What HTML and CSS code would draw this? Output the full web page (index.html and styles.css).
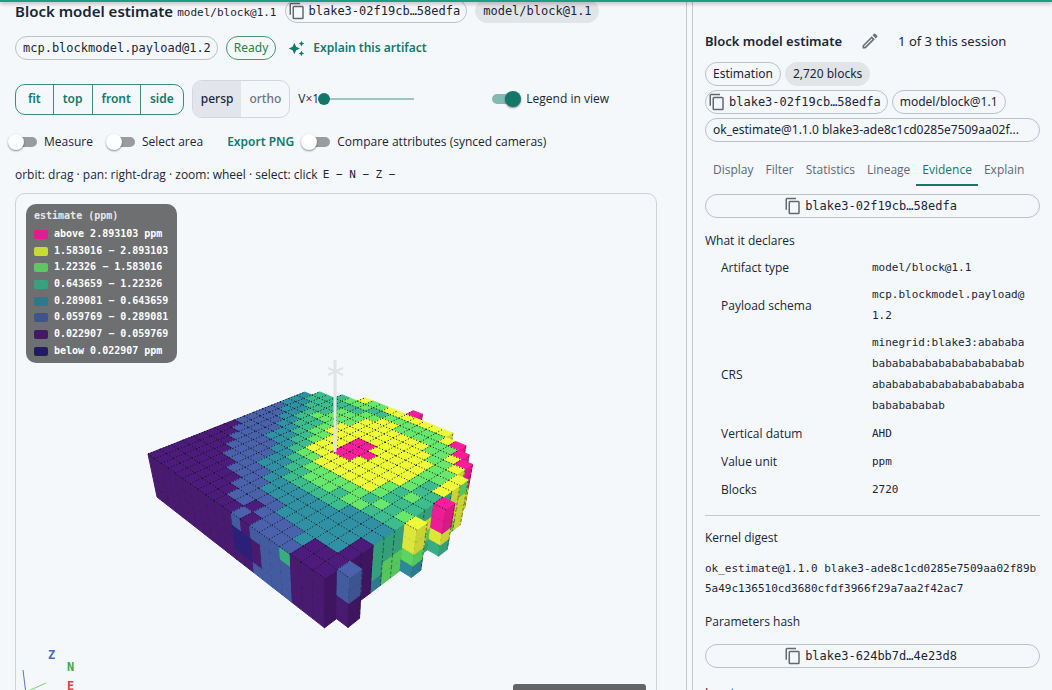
FILE: index.html
```html
<!DOCTYPE html>
<html lang="en">
<head>
<meta charset="utf-8">
<title>Block model estimate</title>
<link rel="stylesheet" href="styles.css">
</head>
<body>
<svg class="defs" aria-hidden="true">
  <symbol id="copy" viewBox="0 0 24 24"><path d="M16 1H4a2 2 0 0 0-2 2v14h2V3h12V1zm3 4H8a2 2 0 0 0-2 2v14a2 2 0 0 0 2 2h11a2 2 0 0 0 2-2V7a2 2 0 0 0-2-2zm0 16H8V7h11v14z"/></symbol>
</svg>
<div class="topbar"></div>
<div class="app">
  <main class="main">
    <div class="head">
      <h1 class="title">Block model estimate</h1>
      <span class="mono small kind">model/block@1.1</span>
      <button class="chip mono"><svg class="ico"><use href="#copy"/></svg>blake3-02f19cb…58edfa</button>
      <span class="chip filled mono">model/block@1.1</span>
    </div>
    <div class="head second">
      <span class="chip mono">mcp.blockmodel.payload@1.2</span>
      <span class="chip ready">Ready</span>
      <button class="link explain"><svg class="spark" viewBox="0 0 24 24"><path d="m19 9 1.250-2.750L23 5l-2.750-1.250L19 1l-1.250 2.750L15 5l2.750 1.250L19 9zm-7.500.5L9 4 6.500 9.500 1 12l5.500 2.500L9 20l2.500-5.500L17 12l-5.500-2.500zM19 15l-1.250 2.750L15 19l2.750 1.250L19 23l1.250-2.750L23 19l-2.750-1.250L19 15z"/></svg>Explain this artifact</button>
    </div>
    <div class="tools">
      <div class="group"><button>fit</button><button>top</button><button>front</button><button>side</button></div>
      <div class="toggle"><button class="on">persp</button><button>ortho</button></div>
      <label class="vx"><span>V×1</span><input type="range" min="1" max="10" value="1"></label>
      <label class="switch legend-switch"><input type="checkbox" checked><span>Legend in view</span></label>
    </div>
    <div class="options">
      <label class="switch"><input type="checkbox"><span>Measure</span></label>
      <label class="switch"><input type="checkbox"><span>Select area</span></label>
      <button class="link export">Export PNG</button>
      <label class="switch"><input type="checkbox"><span>Compare attributes (synced cameras)</span></label>
    </div>
    <p class="hint"><span>orbit: drag · pan: right-drag · zoom: wheel · select: click</span><span class="mono small">E − N − Z −</span></p>
    <section class="view">
      <svg class="scene" viewBox="16 194 640 520" preserveAspectRatio="xMinYMin slice">
        <g id="model"></g>
        <g class="pole"><path d="M335 360V452"/><path class="tick" d="M328 368l15 7M328 375l15-7"/></g>
        <g class="axes"><path class="z" d="M23 670L26 694"/><path class="n" d="M26 692L46 683"/></g>
        <g class="letters"><text class="z" x="48" y="659">Z</text><text class="n" x="67" y="671">N</text><text class="e" x="67" y="690">E</text></g>
      </svg>
      <div class="legend mono">
        <strong>estimate (ppm)</strong>
        <ul>
          <li class="c-top">above 2.893103 ppm</li>
          <li class="c-6">1.583016 − 2.893103</li>
          <li class="c-5">1.22326 − 1.583016</li>
          <li class="c-4">0.643659 − 1.22326</li>
          <li class="c-3">0.289081 − 0.643659</li>
          <li class="c-2">0.059769 − 0.289081</li>
          <li class="c-1">0.022907 − 0.059769</li>
          <li class="c-low">below 0.022907 ppm</li>
        </ul>
      </div>
      <div class="status"></div>
    </section>
  </main>
  <aside class="side">
    <div class="side-head">
      <h2>Block model estimate</h2>
      <button class="edit" aria-label="Rename"><svg viewBox="0 0 24 24"><path d="M3 17.250V21h3.750L17.810 9.940l-3.750-3.750L3 17.250zM5.920 19H5v-.920l9.060-9.060.920.920L5.920 19zM20.710 5.630l-2.340-2.340a1 1 0 0 0-1.410 0l-1.830 1.830 3.750 3.750 1.830-1.830a1 1 0 0 0 0-1.410z"/></svg></button>
      <span class="count">1 of 3 this session</span>
    </div>
    <div class="chips">
      <span class="chip">Estimation</span><span class="chip filled">2,720 blocks</span>
      <button class="chip mono"><svg class="ico"><use href="#copy"/></svg>blake3-02f19cb…58edfa</button><span class="chip">model/block@1.1</span>
      <span class="chip wide">ok_estimate@1.1.0 blake3-ade8c1cd0285e7509aa02f...</span>
    </div>
    <nav class="tabs"><button>Display</button><button>Filter</button><button>Statistics</button><button>Lineage</button><button class="active">Evidence</button><button>Explain</button></nav>
    <button class="chip mono full"><svg class="ico"><use href="#copy"/></svg>blake3-02f19cb…58edfa</button>
    <h3>What it declares</h3>
    <table>
      <tr><th>Artifact type</th><td>model/block@1.1</td></tr>
      <tr><th>Payload schema</th><td>mcp.blockmodel.payload@1.2</td></tr>
      <tr><th>CRS</th><td>minegrid:blake3:abababababababababababababababababababababababababababababababab</td></tr>
      <tr><th>Vertical datum</th><td>AHD</td></tr>
      <tr><th>Value unit</th><td>ppm</td></tr>
      <tr><th>Blocks</th><td>2720</td></tr>
    </table>
    <hr>
    <h3>Kernel digest</h3>
    <p class="digest mono small">ok_estimate@1.1.0 blake3-ade8c1cd0285e7509aa02f89b5a49c136510cd3680cfdf3966f29a7aa2f42ac7</p>
    <h3>Parameters hash</h3>
    <button class="chip mono full"><svg class="ico"><use href="#copy"/></svg>blake3-624bb7d…4e23d8</button>
    <h3>Inputs</h3>
  </aside>
</div>
<script src="model.js"></script>
</body>
</html>
```
FILE: styles.css
```css
:root {
  --bg: #f4f8fb;
  --ink: #1b2536;
  --muted: #5d6778;
  --teal: #14776a;
  --line: #c3c8cd;
  --sans: "Open Sans", "Noto Sans", sans-serif;
  --wide: "Noto Sans", "Open Sans", sans-serif;
  --mono: "DejaVu Sans Mono", monospace;
}
* { box-sizing: border-box; }
body { margin: 0; background: var(--bg); color: var(--ink); font: 12px/20px var(--sans); }
button { font: inherit; color: inherit; background: none; border: 0; padding: 0; cursor: pointer; }
h1, h2, h3, p, ul { margin: 0; padding: 0; }
.defs { display: none; }
.small { font-size: 11px; }
.topbar { position: fixed; inset: 0 0 auto; height: 2px; background: #1b9e81; box-shadow: 0 1px 4px rgba(0, 0, 0, .45); z-index: 5; }
.app { display: flex; height: 100vh; overflow: hidden; }
.main { flex: 1; min-width: 0; padding: 0 29px 0 15px; border-right: 1px solid var(--line); margin-right: 5px; margin-top: -1px; }
.side { width: 360px; flex: none; border-left: 1px solid var(--line); padding: 26px 12px 0; }

.chip { display: inline-flex; align-items: center; height: 24px; padding: 0 7px; border: 1px solid #bcc1c6; border-radius: 12px; white-space: nowrap; font-family: var(--wide); font-size: 12px; }
.mono { font-family: var(--mono); }
.chip.filled { background: #e2e5e8; border-color: #e2e5e8; }
.chip .ico { width: 18px; height: 18px; margin: 0 3px 0 -5px; fill: #62686f; }
.chip.mono { padding: 0 6px 0 7px; }
.chip.ready { color: #2e7d4a; border-color: #4b9668; }
.chip.full { width: 100%; justify-content: center; }
.link { color: var(--teal); font-weight: 600; font-family: var(--wide); }

.head { display: flex; align-items: center; gap: 8px; height: 24px; }
.head.second { margin-top: 13px; }
.title { font: 600 15px/20px var(--wide); }
.kind { margin: 3px 0 0 -4px; }
.explain { display: inline-flex; align-items: center; gap: 8px; margin-left: 4px; }
.spark { width: 17px; height: 17px; fill: var(--teal); }

.tools { display: flex; align-items: center; height: 38px; margin-top: 20px; }
.group { display: flex; border: 1px solid #3b8c80; border-radius: 10px; height: 31px; font-family: var(--wide); }
.group button { padding: 0 9px; color: var(--teal); font-weight: 600; }
.group button:first-child { padding: 0 12px; }
.group button + button { border-left: 1px solid #3b8c80; }
.toggle { display: flex; height: 38px; margin-left: 8px; border: 1px solid #d3d7dd; border-radius: 10px; overflow: hidden; font-weight: 500; font-family: var(--wide); }
.toggle button { padding: 0 8px; color: #6b7380; }
.toggle .on { background: #e2e5ec; color: var(--ink); }
.vx { display: flex; align-items: center; margin-left: 8px; }
.vx span { width: 20px; white-space: nowrap; }
.vx input { appearance: none; width: 96px; height: 12px; margin: 0; background: linear-gradient(#9cc6c1, #9cc6c1) center / 100% 2px no-repeat; }
.vx input::-webkit-slider-thumb { appearance: none; width: 12px; height: 12px; border-radius: 50%; background: var(--teal); }
.legend-switch { margin-left: 78px; }

.switch { display: inline-flex; align-items: center; gap: 7px; }
.switch input { appearance: none; position: relative; width: 22px; height: 10px; margin: 0; border-radius: 5px; background: #999c9f; }
.switch input::before { content: ""; position: absolute; left: -7px; top: -3px; width: 16px; height: 16px; border-radius: 50%; background: #fff; box-shadow: 0 1px 2px rgba(0, 0, 0, .45); }
.switch.legend-switch { gap: 4px; }
.switch input:checked { width: 26px; margin-right: 4px; background: #84b9b3; }
.switch input:checked::before { left: 13px; background: var(--teal); }
.options { display: flex; align-items: center; height: 24px; margin-top: 12px; gap: 20px; }
.options .export { margin: 0 -6px 0 4px; }
.hint { display: flex; gap: 5px; margin-top: 11px; }

.view { position: relative; height: 520px; margin-top: 8px; border: 1px solid #cdd2d7; border-radius: 10px; overflow: hidden; }
.scene { display: block; width: 640px; height: 520px; }
.scene polygon { stroke-width: 1; stroke-linejoin: round; }
.scene .grid { fill: none; stroke: #0b1512; stroke-width: 1; stroke-dasharray: 1 2; }
.scene .edge { fill: none; stroke: #10121c; stroke-opacity: .5; stroke-width: 1; stroke-dasharray: 3 2; }
.pole path { stroke: #e1e3e4; stroke-width: 3; fill: none; }
.pole .tick { stroke-width: 2; }
.axes .z { stroke: #5a6fc0; }
.axes .n { stroke: #77cd7b; }
.letters { font: bold 12px var(--mono); }
.letters .z { fill: #4d68bd; }
.letters .n { fill: #3ca848; }
.letters .e { fill: #cf4646; }
.legend { position: absolute; left: 10px; top: 10px; width: 151px; padding: 3px 8px 4px; border-radius: 10px; background: #6d6f71; color: #fff; font-size: 10px; font-weight: 700; line-height: 17px; white-space: nowrap; }
.legend strong { display: block; color: #e8e8e8; }
.legend ul { list-style: none; padding-top: 2px; }
.legend li { display: flex; align-items: center; gap: 6px; line-height: 16px; }
.legend li + li { margin-top: 1px; }
.legend li:nth-child(3n) { margin-top: 0; }
.legend li::before { content: ""; width: 14px; height: 9px; border-radius: 2px; background: var(--c); }
.c-top { --c: #e01b93; }
.c-6 { --c: #c6dc35; }
.c-5 { --c: #5cc863; }
.c-4 { --c: #38a27f; }
.c-3 { --c: #2a7a8c; }
.c-2 { --c: #3d5490; }
.c-1 { --c: #431866; }
.c-low { --c: #231a66; }
.status { position: absolute; left: 497px; top: 490px; width: 133px; height: 24px; border-radius: 3px; background: #626466; }

.side-head { display: flex; align-items: center; height: 30px; font-family: var(--wide); }
.side-head h2 { font-size: 13px; font-weight: 600; }
.edit { height: 32px; margin: 0 18px; }
.edit svg { width: 20px; height: 20px; fill: #6b7178; display: block; }
.count { font-size: 13px; }
.chips { display: flex; flex-wrap: wrap; gap: 4px; margin-top: 6px; }
.chips .wide { width: 100%; }
.tabs { display: flex; height: 44px; padding-left: 2px; color: var(--muted); }
.tabs button { padding: 13px 6px 0; height: 44px; border-bottom: 2px solid transparent; white-space: nowrap; }
.tabs .active { color: var(--teal); border-color: var(--teal); }
.tabs + .chip { margin-top: 8px; }
h3 { font-size: 12px; font-weight: 400; }
.side h3 { margin-top: 12px; }
.side .tabs + .chip + h3 { margin-top: 10px; }
table { width: 100%; margin-top: 3px; border-spacing: 0; table-layout: fixed; }
th, td { padding: 3px 14px 3px 16px; text-align: left; font-weight: 400; line-height: 22px; }
th { width: 151px; }
td { font: 11px/21px var(--mono); word-break: break-all; }
td { padding: 2px 14px 4px 16px; }
hr { border: 0; border-top: 1px solid var(--line); margin: 11px 0 0; }
.digest { margin-top: 11px; word-break: break-all; }
.side .digest + h3 { margin-top: 13px; }
.side h3 + .full { margin-top: 12px; }
```
FILE: model.js
```js
// Runs of classes along j for each row i: "<class>x<count>" pairs.
// 0 navy, 1 purple, 2 blue, 3 teal, 4 sea green, 5 green, 6 yellow, 7 magenta.
const rows = [
  "1x8 2x5 3x3", "1x7 2x5 3x3 4x2", "1x6 2x5 3x3 4x3", "1x5 2x5 3x2 4x6",
  "1x4 2x4 3x3 4x2 5x1 4x3 5x1", "1x4 2x4 3x2 4x3 5x3 4x1 5x1 6x1", "1x3 2x4 3x2 4x2 5x5 4x1 5x2",
  "1x3 2x2 3x3 4x2 5x2 6x2 5x3 4x1 5x1", "1x2 2x3 3x2 4x1 5x1 6x7 5x1 4x1 6x1", "1x1 2x3 3x2 4x2 5x1 6x8 5x1 6x1",
  "1x1 2x2 3x2 4x2 5x1 6x2 7x3 6x4 5x1 6x1 7x1", "2x1 1x1 2x1 3x2 4x1 5x2 6x2 7x3 6x3 5x2 6x1", "1x1 2x2 3x2 4x1 5x2 6x3 7x1 6x4 5x2 6x1",
  "2x2 3x3 4x1 5x2 6x8 5x2 6x1", "2x2 3x3 4x2 5x1 6x8 5x2 6x1", "2x2 3x3 4x1 5x2 6x7 5x2 6x1",
  "2x1 3x5 5x1 4x1 5x2 6x4 5x3 7x1", "1x2 3x4 4x1 5x1 4x2 5x5 6x1 7x1", "1x2 3x4 4x3 5x1 4x2 5x2 6x1 7x1",
  "1x4 3x2 4x1 5x1 4x3 6x3", "",
];
const surface = rows.map(r => r.split(" ").filter(Boolean).flatMap(p => Array(+p.slice(2)).fill(+p[0])));
surface[20][1] = 2; surface[20][7] = 6; surface[20][10] = 7;

// Classes of the layers, top to bottom, where they differ from the default.
const columns = {
  "11,0": [2, 0, 0, 1], "12,0": [1, 0, 0, 1], "13,0": [2, 1, 1, 2], "16,0": [4, 2, 2, 2],
  "20,1": [2, 2, 1, 1], "20,7": [6, 6, 5, 3], "20,10": [7, 7, 6, 4],
  "19,4": [4, 4, 4, 3], "19,5": [4, 4, 5, 5], "19,6": [4, 4, 5, 5], "19,7": [4, 4, 4, 3], "19,8": [4, 4, 4, 3],
  "19,9": [4, 6, 5, 4], "19,10": [4, 4, 6, 6], "19,11": [4, 4, 6, 6], "19,12": [6, 6, 6, 5], "19,13": [5, 6, 6, 6],
  "18,14": [6, 6, 6, 6], "18,15": [7, 7, 6, 6],
};
const lit = ["#2a2180", "#4d1b7b", "#4a61ab", "#3091a5", "#3dbd8d", "#67e76b", "#edfb3a", "#fb1d9c"];
const left = ["#2a2079", "#481a70", "#435c9f", "#2f869a", "#38ad82", "#5bd562", "#dde63a", "#ee1c95"];
const right = ["#231a66", "#3f1562", "#3d5490", "#2b7a8d", "#33a079", "#55c55c", "#c9d336", "#d81a88"];

const project = (i, j, k) => {
  const w = 1.371 - .0186 * i + .0195 * j + .0185 * k;
  return [(202.97 + 6.064 * i + 19.383 * j + 5.994 * k) / w, (622.43 - 2.232 * i + 2.34 * j + 23.958 * k) / w]
    .map(n => n.toFixed(1)).join(",");
};
const face = (pts, fill) => `<polygon points="${pts.join(" ")}" fill="${fill}" stroke="${fill}"/>`;
const line = (a, b, cls) => `<path class="${cls}" d="M${a}L${b}"/>`;
const has = (i, j) => surface[i] && surface[i][j] !== undefined;

let out = "";
let grid = "";
for (let i = 0; i < surface.length; i++) {
  for (let j = 20; j >= 0; j--) {
    if (!has(i, j)) continue;
    const stack = columns[`${i},${j}`] || Array(4).fill(surface[i][j]);
    for (let k = 3; k >= 0; k--) {
      if (!has(i, j - 1)) {
        const p = [project(i, j, k), project(i + 1, j, k), project(i + 1, j, k + 1), project(i, j, k + 1)];
        out += face(p, left[stack[k]]) + line(p[0], p[1], "edge") + line(p[1], p[2], "edge");
      }
      if (!has(i + 1, j)) {
        const p = [project(i + 1, j, k), project(i + 1, j + 1, k), project(i + 1, j + 1, k + 1), project(i + 1, j, k + 1)];
        out += face(p, right[stack[k]]) + line(p[0], p[1], "edge") + line(p[1], p[2], "edge");
      }
    }
    const p = [project(i, j, 0), project(i + 1, j, 0), project(i + 1, j + 1, 0), project(i, j + 1, 0)];
    out += face(p, lit[surface[i][j]]);
    grid += line(p[0], p[1], "grid") + line(p[0], p[3], "grid");
  }
}
document.getElementById("model").innerHTML = out + grid;
```
